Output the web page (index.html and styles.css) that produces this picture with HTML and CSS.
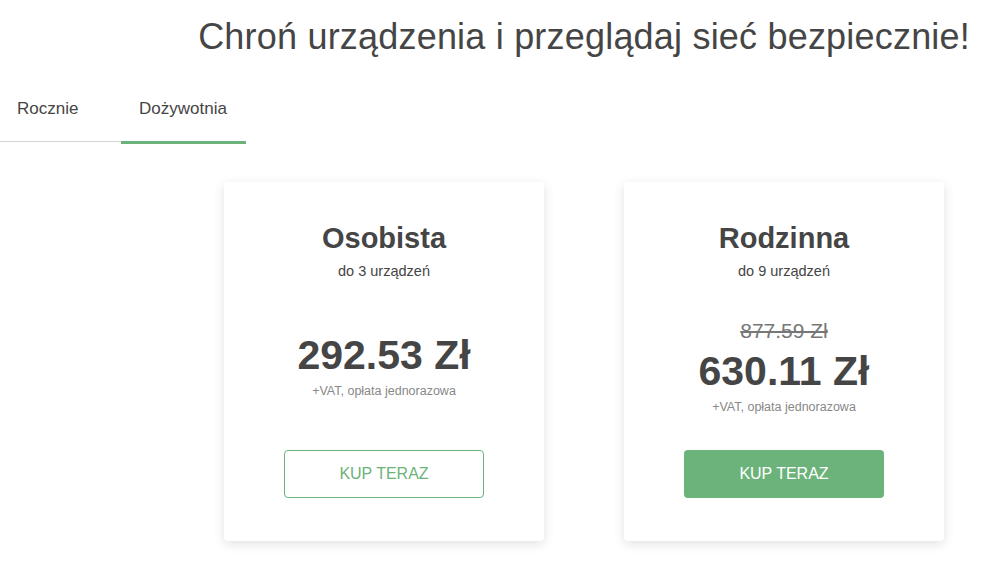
FILE: index.html
```html
<!DOCTYPE html>
<html lang="pl">
<head>
<meta charset="utf-8">
<title>Ceny</title>
<link rel="stylesheet" href="styles.css">
</head>
<body>
<div class="page">
  <h1 class="headline">Chroń urządzenia i przeglądaj sieć bezpiecznie!</h1>
  <div class="tabs">
    <div class="tab">Rocznie</div>
    <div class="tab active">Dożywotnia</div>
  </div>
  <div class="cards">
    <div class="card">
      <div class="plan">Osobista</div>
      <div class="devices">do 3 urządzeń</div>
      <div class="price-box">
        <div class="price">292.53 Zł</div>
        <div class="vat">+VAT, opłata jednorazowa</div>
      </div>
      <a class="btn btn-outline">KUP TERAZ</a>
    </div>
    <div class="card">
      <div class="plan">Rodzinna</div>
      <div class="devices">do 9 urządzeń</div>
      <div class="price-box">
        <div class="old-price">877.59 Zł</div>
        <div class="price">630.11 Zł</div>
        <div class="vat">+VAT, opłata jednorazowa</div>
      </div>
      <a class="btn btn-solid">KUP TERAZ</a>
    </div>
  </div>
</div>
</body>
</html>
```
FILE: styles.css
```css
* { box-sizing: border-box; }
html, body { margin: 0; padding: 0; background: #fff; }
body {
  font-family: "Liberation Sans", Arial, sans-serif;
  color: #454545;
  width: 988px;
  height: 582px;
  overflow: hidden;
}
.page { display: flex; flex-direction: column; }
.headline {
  margin: 0;
  padding: 16px 18px 0 0;
  text-align: right;
  font-size: 36px;
  font-weight: 400;
  line-height: 42px;
  letter-spacing: 0.2px;
  color: #454545;
}
.tabs {
  display: flex;
  align-items: flex-start;
  margin-top: 35px;
  width: 246px;
  height: 49px;
  border-bottom: 1px solid #d4d4d4;
}
.tab {
  font-size: 17px;
  color: #454545;
  padding: 0 17px;
  height: 48px;
  line-height: 32px;
  width: 121px;
  flex: none;
}
.tab.active {
  width: 125px;
  padding-left: 18px;
  height: 51px;
  border-bottom: 3px solid #6bb37b;
}
.cards {
  display: flex;
  gap: 80px;
  padding-left: 224px;
  margin-top: 40px;
}
.card {
  width: 320px;
  height: 359px;
  background: #fff;
  border-radius: 4px;
  box-shadow: 0 3px 12px rgba(0, 0, 0, 0.12);
  display: flex;
  flex-direction: column;
  align-items: center;
  padding-top: 39px;
}
.plan {
  font-size: 29px;
  font-weight: 700;
  line-height: 34px;
  color: #454545;
}
.devices {
  font-size: 14.5px;
  line-height: 18px;
  margin-top: 7px;
  color: #454545;
}
.price-box {
  height: 130px;
  margin-top: 21px;
  display: flex;
  flex-direction: column;
  align-items: center;
  justify-content: center;
}
.old-price {
  font-size: 21px;
  line-height: 26px;
  color: #777;
  text-decoration: line-through;
  margin-bottom: 5px;
}
.price {
  font-size: 41px;
  font-weight: 700;
  line-height: 44px;
  color: #454545;
}
.vat {
  font-size: 12.5px;
  line-height: 16px;
  color: #888;
  margin-top: 6px;
}
.btn {
  display: flex;
  align-items: center;
  justify-content: center;
  width: 200px;
  height: 48px;
  border-radius: 4px;
  font-size: 16px;
  margin-top: 19px;
}
.btn-outline {
  border: 1px solid #6bb37b;
  color: #6bb37b;
}
.btn-solid {
  background: #6bb37b;
  color: #fff;
}
```
